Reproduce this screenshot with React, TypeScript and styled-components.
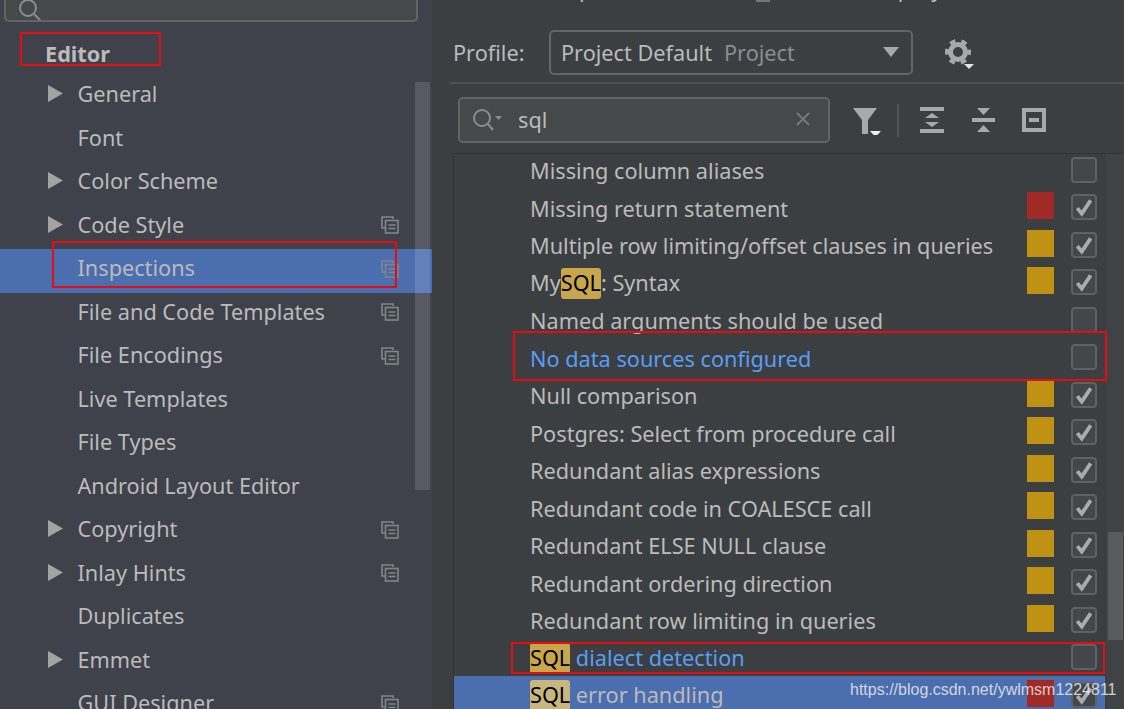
import React from "react";
import styled, { createGlobalStyle } from "styled-components";

const Global = createGlobalStyle`
  html, body { margin: 0; padding: 0; background: #3c3f41; }
  * { box-sizing: border-box; }
`;

const Frame = styled.div`
  position: relative;
  display: flex;
  width: 1124px;
  height: 709px;
  overflow: hidden;
  background: #3c3f41;
  color: #bbbbbb;
  font-family: "Noto Sans", "Liberation Sans", sans-serif;
  font-size: 21.7px;
  -webkit-font-smoothing: antialiased;
`;

const Sidebar = styled.aside`
  position: relative;
  flex: 0 0 432px;
  height: 709px;
  background: #3f424b;
  overflow: hidden;
`;

const SideSearch = styled.div`
  width: 414px;
  height: 22px;
  margin-left: 4px;
  padding-left: 11px;
  background: #45494a;
  border: 2px solid #646464;
  border-top: 0;
  border-radius: 0 0 5px 5px;
  overflow: hidden;
`;

const SectionTitle = styled.div`
  height: 53px;
  padding: 16px 0 0 45px;
  font-weight: 700;
  line-height: 32px;
`;

const SideRow = styled.div<{ $selected?: boolean }>`
  display: flex;
  align-items: center;
  height: 43.5px;
  padding: 0 0 6px 48px;
  background: ${(p) => (p.$selected ? "#4b6eaf" : "transparent")};
`;

const Arrow = styled.svg`
  flex: 0 0 15px;
  width: 15px;
  height: 17px;
  fill: #a3a3a3;
`;

const ArrowSlot = styled.span`
  display: flex;
  flex: 0 0 29.5px;
`;

const Label = styled.span`
  flex: 1;
  white-space: nowrap;
`;

const ProjectIcon = styled.svg`
  flex: 0 0 18px;
  width: 18px;
  height: 18px;
  margin: 2px 33px 0 0;
  fill: none;
  stroke: #7f868b;
  stroke-width: 1.6;
`;

const SideScroll = styled.div`
  position: absolute;
  left: 415px;
  top: 82px;
  width: 15px;
  height: 408px;
  background: rgba(255, 255, 255, 0.13);
`;

const Main = styled.main`
  position: relative;
  flex: 1;
  min-width: 0;
  height: 709px;
`;

const TopClip = styled.div`
  display: flex;
  height: 30px;
  padding-left: 147px;
  overflow: hidden;
  line-height: 30px;
  color: #bbbbbb;
`;

const TopFragment = styled.span`
  margin-top: -26px;
  white-space: nowrap;
`;

const TopRight = styled.span`
  display: flex;
  gap: 8px;
  margin: -26px 0 0 164px;
  white-space: nowrap;
`;

const TopBox = styled.span`
  width: 14px;
  height: 28px;
  border: 2px solid #777;
`;

const ProfileRow = styled.div`
  display: flex;
  align-items: center;
  height: 45px;
  padding-left: 21px;
`;

const ProfileLabel = styled.span`
  flex: 0 0 96px;
  margin-bottom: 1px;
`;

const Combo = styled.div`
  display: flex;
  align-items: center;
  gap: 12px;
  width: 364px;
  height: 45px;
  padding: 0 12px 1px 10px;
  border: 2px solid #646464;
  border-radius: 5px;
`;

const Muted = styled.span`
  flex: 1;
  color: #8a8d8f;
`;

const Caret = styled.svg`
  width: 16px;
  height: 10px;
  fill: #a8a8a8;
`;

const GearIcon = styled.svg`
  width: 30px;
  height: 30px;
  margin: 2px 0 0 32px;
`;

const Rule = styled.div`
  height: 2px;
  margin: 7px 0 0 18px;
  background: #515151;
`;

const FilterRow = styled.div`
  display: flex;
  align-items: center;
  height: 46px;
  margin: 13px 0 10px 26px;
`;

const SearchBox = styled.div`
  display: flex;
  align-items: center;
  width: 372px;
  height: 46px;
  padding: 0 18px 2px 11px;
  background: #45494a;
  border: 2px solid #646464;
  border-radius: 5px;
`;

const SearchGlyph = styled.svg<{ $lift?: number }>`
  flex: 0 0 32px;
  width: 32px;
  height: 26px;
  margin-top: ${(p) => p.$lift ?? 0}px;
  fill: none;
  stroke: #8a8d8f;
  stroke-width: 2;
`;

const SearchText = styled.span`
  flex: 1;
  margin-left: 15px;
`;

const ClearGlyph = styled.svg`
  width: 14px;
  height: 14px;
  stroke: #777a7c;
  stroke-width: 1.8;
`;

const ToolIcon = styled.svg<{ $gap: number }>`
  flex: none;
  width: 30px;
  height: 30px;
  margin-left: ${(p) => p.$gap}px;
  fill: #a8a9aa;
`;

const ToolDivider = styled.div`
  width: 2px;
  height: 33px;
  margin-left: 15px;
  background: #515455;
`;

const Tree = styled.section`
  position: relative;
  height: 556px;
  margin-left: 21px;
  background: #3c3f41;
  border-top: 1px solid #303234;
  border-left: 1px solid #303234;
  overflow: hidden;
`;

const TreeRows = styled.div`
  margin-top: -3px;
`;

const TreeRow = styled.div<{ $selected?: boolean }>`
  display: flex;
  align-items: center;
  width: 651px;
  height: 37.5px;
  padding: 0 8px 0 76px;
  background: ${(p) => (p.$selected ? "#4b6eaf" : "transparent")};
  white-space: nowrap;
`;

const RowName = styled.span<{ $link?: boolean }>`
  flex: 1;
  padding-top: 2px;
  color: ${(p) => (p.$link ? "#589df6" : "#bbbbbb")};
`;

const Match = styled.mark<{ $selected?: boolean }>`
  display: inline-block;
  height: 31px;
  line-height: 30px;
  border-radius: 3px;
  color: #000;
  background: ${(p) => (p.$selected ? "#c8b77c" : "#c8a64c")};
`;

const Swatch = styled.span<{ $color: string }>`
  flex: 0 0 27px;
  height: 27px;
  margin: 0 17px 3px 0;
  background: ${(p) => p.$color};
`;

const CheckBox = styled.span`
  display: flex;
  flex: 0 0 26px;
  align-items: center;
  justify-content: center;
  height: 26px;
  background: #43474a;
  border: 2px solid #5f6264;
  border-radius: 4px;
`;

const CheckMark = styled.svg`
  width: 20px;
  height: 20px;
  fill: none;
  stroke: #a9abac;
  stroke-width: 3.4;
`;

const TreeScroll = styled.div`
  position: absolute;
  top: 0;
  right: 0;
  bottom: 0;
  width: 18px;
  background: #3f4345;
`;

const TreeThumb = styled.div`
  position: absolute;
  top: 378px;
  left: 2px;
  width: 15px;
  height: 108px;
  background: #595c5e;
`;

const Annotation = styled.div<{ $x: number; $y: number; $w: number; $h: number }>`
  position: absolute;
  left: ${(p) => p.$x}px;
  top: ${(p) => p.$y}px;
  width: ${(p) => p.$w}px;
  height: ${(p) => p.$h}px;
  border: 2px solid #e60c12;
`;

const Watermark = styled.div`
  position: absolute;
  left: 850px;
  top: 680px;
  font-family: "Liberation Sans", Arial, sans-serif;
  font-size: 16px;
  line-height: 20px;
  color: rgba(235, 235, 235, 0.85);
  white-space: nowrap;
`;

type SideItem = { name: string; arrow?: boolean; project?: boolean; selected?: boolean };

const sideItems: SideItem[] = [
  { name: "General", arrow: true },
  { name: "Font" },
  { name: "Color Scheme", arrow: true },
  { name: "Code Style", arrow: true, project: true },
  { name: "Inspections", project: true, selected: true },
  { name: "File and Code Templates", project: true },
  { name: "File Encodings", project: true },
  { name: "Live Templates" },
  { name: "File Types" },
  { name: "Android Layout Editor" },
  { name: "Copyright", arrow: true, project: true },
  { name: "Inlay Hints", arrow: true, project: true },
  { name: "Duplicates" },
  { name: "Emmet", arrow: true },
  { name: "GUI Designer", project: true },
];

const RED = "#a12a27";
const AMB = "#bf9214";

type TreeItem = {
  before?: string;
  match?: boolean;
  after?: string;
  swatch?: string;
  checked?: boolean;
  link?: boolean;
  selected?: boolean;
};

const treeItems: TreeItem[] = [
  { before: "Missing column aliases" },
  { before: "Missing return statement", swatch: RED, checked: true },
  { before: "Multiple row limiting/offset clauses in queries", swatch: AMB, checked: true },
  { before: "My", match: true, after: ": Syntax", swatch: AMB, checked: true },
  { before: "Named arguments should be used" },
  { before: "No data sources configured", link: true },
  { before: "Null comparison", swatch: AMB, checked: true },
  { before: "Postgres: Select from procedure call", swatch: AMB, checked: true },
  { before: "Redundant alias expressions", swatch: AMB, checked: true },
  { before: "Redundant code in COALESCE call", swatch: AMB, checked: true },
  { before: "Redundant ELSE NULL clause", swatch: AMB, checked: true },
  { before: "Redundant ordering direction", swatch: AMB, checked: true },
  { before: "Redundant row limiting in queries", swatch: AMB, checked: true },
  { match: true, after: " dialect detection", link: true },
  { match: true, after: " error handling", swatch: RED, checked: true, selected: true },
];

const ProjectGlyph = () => (
  <ProjectIcon viewBox="0 0 18 18">
    <path d="M12 3V1H1v11h3" />
    <rect x="4.5" y="4.5" width="12.5" height="12.5" />
    <path d="M7.5 9h7M7.5 12.500h7" />
  </ProjectIcon>
);

export default function App() {
  return (
    <Frame>
      <Global />
      <Sidebar>
        <SideSearch>
          <SearchGlyph $lift={-16} viewBox="0 0 32 26">
            <circle cx="11" cy="11" r="8" />
            <path d="M17 17l6 6" />
          </SearchGlyph>
        </SideSearch>
        <SectionTitle>Editor</SectionTitle>
        {sideItems.map((item) => (
          <SideRow key={item.name} $selected={item.selected}>
            <ArrowSlot>
              {item.arrow && (
                <Arrow viewBox="0 0 15 17">
                  <path d="M0 0l15 8.500L0 17z" />
                </Arrow>
              )}
            </ArrowSlot>
            <Label>{item.name}</Label>
            {item.project && <ProjectGlyph />}
          </SideRow>
        ))}
        <SideScroll />
      </Sidebar>
      <Main>
        <TopClip>
          <TopFragment>p</TopFragment>
          <TopRight>
            <TopBox />
            For current project
          </TopRight>
        </TopClip>
        <ProfileRow>
          <ProfileLabel>Profile:</ProfileLabel>
          <Combo>
            <span>Project Default</span>
            <Muted>Project</Muted>
            <Caret viewBox="0 0 16 10">
              <path d="M0 0h16L8 10z" />
            </Caret>
          </Combo>
          <GearIcon viewBox="0 0 30 30">
            <circle cx="13" cy="13" r="7.500" fill="none" stroke="#a8a9aa" strokeWidth="5" />
            <circle
              cx="13"
              cy="13"
              r="11"
              fill="none"
              stroke="#a8a9aa"
              strokeWidth="4"
              strokeDasharray="5.500 6.020"
              strokeDashoffset="2.750"
            />
            <path fill="#e4e4e4" d="M19 25h10l-5 5z" />
          </GearIcon>
        </ProfileRow>
        <Rule />
        <FilterRow>
          <SearchBox>
            <SearchGlyph viewBox="0 0 32 26">
              <circle cx="11" cy="12" r="8" />
              <path d="M17 18l5 6" />
              <path d="M24 10h7l-3.500 4z" fill="#8a8d8f" stroke="none" />
            </SearchGlyph>
            <SearchText>sql</SearchText>
            <ClearGlyph viewBox="0 0 14 14">
              <path d="M1 1l12 12M13 1L1 13" />
            </ClearGlyph>
          </SearchBox>
          <ToolIcon $gap={22} viewBox="0 0 30 30">
            <path d="M1 3h24l-9 12v14h-6V15z" />
            <path fill="#f0f0f0" d="M18 26h11l-5.500 6z" />
          </ToolIcon>
          <ToolDivider />
          <ToolIcon $gap={18} viewBox="0 0 30 30">
            <path d="M3 2h24v4H3zM3 24h24v4H3zM15 8l7 5H8zM15 22l-7-5h14z" />
          </ToolIcon>
          <ToolIcon $gap={21} viewBox="0 0 30 30">
            <path d="M4 13h23v4H4zM9 3h13l-6.500 7zM15.500 20l6.500 7H9z" />
          </ToolIcon>
          <ToolIcon $gap={21} viewBox="0 0 30 30">
            <path
              fillRule="evenodd"
              d="M3 3h24v24H3zM7 7v16h16V7zM10 13h10v4H10z"
            />
          </ToolIcon>
        </FilterRow>
        <Tree>
          <TreeRows>
            {treeItems.map((row, i) => (
              <TreeRow key={i} $selected={row.selected}>
                <RowName $link={row.link}>
                  {row.before}
                  {row.match && <Match $selected={row.selected}>SQL</Match>}
                  {row.after}
                </RowName>
                {row.swatch && <Swatch $color={row.swatch} />}
                <CheckBox>
                  {row.checked && (
                    <CheckMark viewBox="0 0 18 18">
                      <path d="M3 10l4 5 8-12" />
                    </CheckMark>
                  )}
                </CheckBox>
              </TreeRow>
            ))}
          </TreeRows>
          <TreeScroll>
            <TreeThumb />
          </TreeScroll>
        </Tree>
      </Main>
      <Annotation $x={20} $y={32} $w={141} $h={34} />
      <Annotation $x={52} $y={241} $w={345} $h={47} />
      <Annotation $x={513} $y={331} $w={594} $h={50} />
      <Annotation $x={511} $y={642} $w={594} $h={32} />
      <Watermark>https://blog.csdn.net/ywlmsm1224811</Watermark>
    </Frame>
  );
}
